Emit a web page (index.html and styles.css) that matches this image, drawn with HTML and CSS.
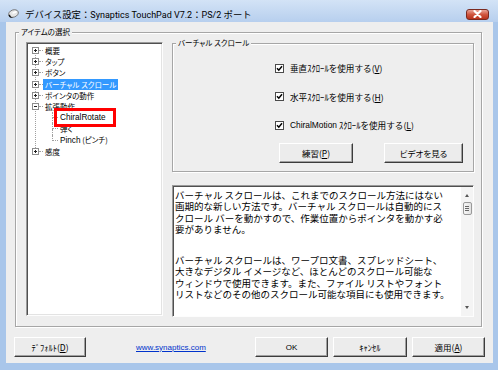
FILE: index.html
```html
<!DOCTYPE html>
<html>
<head>
<meta charset="utf-8">
<link rel="stylesheet" href="styles.css">
</head>
<body>

<div class="window">
  <div class="titlebar">
    <svg class="app-icon" width="12" height="10" viewBox="0 0 12 10">
      <ellipse cx="6.5" cy="4.5" rx="5" ry="3.6" transform="rotate(-20 6.5 4.5)" fill="#e6e6e6" stroke="#6a6a6a" stroke-width="0.8"/>
      <path d="M1.6 6.2 Q2.2 9.4 6.4 8.9 Q3.4 8.4 3 5.4 Z" fill="#111"/>
      <ellipse cx="7.6" cy="3.4" rx="2.4" ry="1" transform="rotate(-20 7.6 3.4)" fill="#fff"/>
    </svg>
    <span class="title">デバイス設定：<span class="title-latin">Synaptics TouchPad V7.2</span>：<span class="title-latin">PS/2 </span>ポート</span>
    <div class="close">
      <svg width="11" height="8" viewBox="0 0 11 8">
        <path d="M2.5 1 L8.5 7 M8.5 1 L2.5 7" stroke="#fff" stroke-width="2.2" stroke-linecap="round"/>
      </svg>
    </div>
  </div>

  <div class="client">
    <div class="group items">
      <div class="group-title">アイテムの選択</div>
      <div class="items-body">

        <div class="tree">
          <div class="row"><span class="toggle plus"></span><span class="hline"></span><span class="label">概要</span></div>
          <div class="row"><span class="toggle plus"></span><span class="hline"></span><span class="label">タップ</span></div>
          <div class="row"><span class="toggle plus"></span><span class="hline"></span><span class="label">ボタン</span></div>
          <div class="row"><span class="toggle plus"></span><span class="hline"></span><span class="label selected">バーチャル スクロール</span></div>
          <div class="row"><span class="toggle plus"></span><span class="hline"></span><span class="label">ポインタの動作</span></div>
          <div class="row"><span class="toggle"></span><span class="hline"></span><span class="label">拡張動作</span></div>
          <div class="row child"><span class="branch"><i></i><i></i></span><span class="label latin mark">ChiralRotate</span></div>
          <div class="row child"><span class="branch"><i></i><i></i></span><span class="label">弾く</span></div>
          <div class="row child last"><span class="branch"><i></i><i></i></span><span class="label"><span class="latin">Pinch</span> (ピンチ)</span></div>
          <div class="row"><span class="toggle plus"></span><span class="hline"></span><span class="label">感度</span></div>
        </div>

        <div class="right">
          <div class="group scroll-group">
            <div class="group-title">バーチャル スクロール</div>
            <div class="checks">
              <div class="check"><span class="box"></span>垂直ｽｸﾛｰﾙを使用する(<u>V</u>)</div>
              <div class="check"><span class="box"></span>水平ｽｸﾛｰﾙを使用する(<u>H</u>)</div>
              <div class="check"><span class="box"></span><span class="latin">ChiralMotion</span>&nbsp;ｽｸﾛｰﾙを使用する(<u>L</u>)</div>
            </div>
            <div class="actions">
              <div class="btn practice">練習(<u>P</u>)</div>
              <div class="btn video">ビデオを見る</div>
            </div>
          </div>

          <div class="desc">
            <div class="desc-text">
              <p>バーチャル スクロールは、これまでのスクロール方法にはない<br>
              画期的な新しい方法です。バーチャル スクロールは自動的にス<br>
              クロール バーを動かすので、作業位置からポインタを動かす必<br>
              要がありません。</p>
              <p>バーチャル スクロールは、ワープロ文書、スプレッドシート、<br>
              大きなデジタル イメージなど、ほとんどのスクロール可能な<br>
              ウィンドウで使用できます。また、ファイル リストやフォント<br>
              リストなどのその他のスクロール可能な項目にも使用できます。</p>
            </div>
            <div class="scrollbar">
              <span class="arrow up"></span>
              <span class="thumb"><i></i><i></i><i></i></span>
              <span class="arrow down"></span>
            </div>
          </div>
        </div>

      </div>
    </div>

    <div class="footer">
      <div class="btn default">ﾃﾞﾌｫﾙﾄ(<u>D</u>)</div>
      <a class="link" href="#">www.synaptics.com</a>
      <div class="btn ok">OK</div>
      <div class="btn cancel">ｷｬﾝｾﾙ</div>
      <div class="btn apply">適用(<u>A</u>)</div>
    </div>
  </div>
</div>

</body>
</html>
```

FILE: styles.css
```css
body {
  margin: 0;
  font-family: "Noto Sans CJK JP", sans-serif;
  color: #000;
}

.window {
  width: 498px;
  height: 370px;
  background: #a9c6ea;
  display: flex;
  flex-direction: column;
  box-sizing: border-box;
}

.latin {
  font-family: "Liberation Sans", "Noto Sans CJK JP", sans-serif;
}

/* title bar */
.titlebar {
  height: 22px;
  box-sizing: border-box;
  padding: 6px 9px 0 7px;
  display: flex;
  align-items: center;
  background: linear-gradient(#d3e3f6, #b7cfee);
}

.app-icon {
  flex: none;
}

.title {
  margin-left: 6px;
  font-size: 9.4px;
  white-space: nowrap;
}

.title-latin {
  font-family: "Roboto", "Liberation Sans", sans-serif;
  font-size: 9px;
}

.close {
  margin-left: auto;
  width: 23px;
  height: 11px;
  box-sizing: border-box;
  border: 1px solid #7a2a20;
  border-radius: 3px;
  background: linear-gradient(#eaa497, #d0563f 50%, #b8321c);
  display: flex;
  align-items: center;
  justify-content: center;
}

/* client area */
.client {
  margin: 0 5px 0 6px;
  height: 341px;
  box-sizing: border-box;
  padding: 10px 11px 0 9px;
  background: #eeeeee;
}

.group {
  border: 1px solid #a6a6a6;
  box-shadow: inset 1px 1px #fff, 1px 1px #fff;
  box-sizing: border-box;
}

.group-title {
  display: table;
  margin: -7px 0 0 3px;
  padding: 0 2px;
  background: #eeeeee;
  font-size: 7.5px;
  line-height: 12px;
  font-feature-settings: "palt";
  white-space: nowrap;
}

.items {
  height: 295px;
}

.items-body {
  display: grid;
  grid-template-columns: 137px 302px;
  column-gap: 9px;
  padding: 4px 7px 0 10px;
}

/* tree */
.tree {
  height: 274px;
  box-sizing: border-box;
  background: #fff repeating-linear-gradient(#a0a0a0 0 1px, transparent 1px 2px) 8px 8px / 1px 101px no-repeat;
  border: 1px solid;
  border-color: #9a9a9a #fdfdfd #fdfdfd #9a9a9a;
  box-shadow: inset 1px 1px #505050, inset -1px -1px #e3e3e3;
  padding: 2px 0 0 5px;
}

.row {
  height: 11.2px;
  display: flex;
  align-items: center;
  font-size: 7.5px;
  font-feature-settings: "palt";
  white-space: nowrap;
}

.toggle {
  width: 7px;
  height: 7px;
  box-sizing: border-box;
  border: 1px solid #8c8c8c;
  background: linear-gradient(#222, #222) center / 3px 1px no-repeat, #fff;
}

.toggle.plus {
  background: linear-gradient(#222, #222) center / 3px 1px no-repeat,
              linear-gradient(#222, #222) center / 1px 3px no-repeat, #fff;
}

.hline {
  width: 4px;
  border-top: 1px dotted #a0a0a0;
}

.label {
  padding: 0 2px;
  line-height: 11px;
}

.label.latin {
  font-size: 8.2px;
}

.label .latin {
  font-size: 8.2px;
}

.selected {
  background: #3399ff;
  color: #fff;
}

.row.child {
  padding-left: 20px;
  align-items: stretch;
}

.branch {
  width: 6px;
  display: flex;
  flex-direction: column;
}

.branch i {
  flex: 1;
  border-left: 1px dotted #a0a0a0;
}

.branch i:first-child {
  border-bottom: 1px dotted #a0a0a0;
}

.row.last .branch i:last-child {
  border-left: none;
}

.row.child .label {
  align-self: center;
}

.mark {
  position: relative;
}

.mark::after {
  content: "";
  position: absolute;
  left: -4px;
  right: -8px;
  top: -4px;
  bottom: -4px;
  border: 3px solid #ff0000;
}

/* right side */
.right {
  display: flex;
  flex-direction: column;
}

.scroll-group {
  margin-top: 1px;
  height: 129px;
}

.checks {
  margin: 13px 0 0 102px;
  display: flex;
  flex-direction: column;
  gap: 16.5px;
}

.check {
  height: 12px;
  display: flex;
  align-items: center;
  font-size: 8.6px;
  white-space: nowrap;
}

.check .latin {
  font-size: 8.4px;
}

.box {
  width: 9px;
  height: 9px;
  box-sizing: border-box;
  margin-right: 6px;
  border: 1px solid #4a4a4a;
  background: #fff url("data:image/svg+xml,%3Csvg xmlns='http://www.w3.org/2000/svg' width='7' height='7'%3E%3Cpath d='M1 3.2 L2.8 5.2 L6 1.2' fill='none' stroke='%23000' stroke-width='1.5'/%3E%3C/svg%3E") center no-repeat;
}

.actions {
  display: flex;
  gap: 31px;
  margin: 12px 0 0 106px;
}

.btn {
  height: 20px;
  box-sizing: border-box;
  display: flex;
  align-items: center;
  justify-content: center;
  background: #ececec;
  border: 1px solid;
  border-color: #fff #3c3c3c #3c3c3c #fff;
  box-shadow: inset -1px -1px #a0a0a0;
  font-size: 8.5px;
  font-feature-settings: "palt";
  white-space: nowrap;
}

.practice { width: 74px; }
.video { width: 79px; }

.desc {
  margin-top: 13px;
  height: 132px;
  box-sizing: border-box;
  display: flex;
  background: #fff;
  border: 1px solid;
  border-color: #9a9a9a #fdfdfd #fdfdfd #9a9a9a;
  box-shadow: inset 1px 1px #505050;
}

.desc-text {
  flex: 1;
  padding: 3.5px 0 0 2px;
  font-size: 9.5px;
  line-height: 11.5px;
  white-space: nowrap;
  overflow: hidden;
}

.desc-text p {
  margin: 0 0 19px;
}

.scrollbar {
  width: 12px;
  margin: 1px 0 0;
  display: flex;
  flex-direction: column;
  align-items: center;
  background: #f4f4f4;
}

.arrow {
  width: 0;
  height: 0;
  border-left: 2.5px solid transparent;
  border-right: 2.5px solid transparent;
}

.arrow.up {
  margin-top: 7px;
  border-bottom: 3px solid #555;
}

.arrow.down {
  margin-top: auto;
  margin-bottom: 7px;
  border-top: 3px solid #555;
}

.thumb {
  margin-top: 5px;
  width: 9px;
  height: 13px;
  box-sizing: border-box;
  border: 1px solid #9a9a9a;
  border-radius: 2px;
  background: linear-gradient(90deg, #f6f6f6, #e2e2e2);
  display: flex;
  flex-direction: column;
  align-items: center;
  justify-content: center;
  gap: 1px;
}

.thumb i {
  width: 4px;
  height: 1px;
  background: #666;
}

/* footer */
.footer {
  display: flex;
  margin: 10px -3px 0 -1px;
}

.default { width: 72px; }

.link {
  margin-left: 50px;
  align-self: center;
  font-family: "Liberation Sans", sans-serif;
  font-size: 8px;
  color: #0033cc;
}

.ok {
  margin-left: auto;
  width: 73px;
  font-family: "Liberation Sans", sans-serif;
  font-size: 8px;
}

.cancel {
  margin-left: 5px;
  width: 74px;
}

.apply {
  margin-left: 5px;
  width: 73px;
}
```
